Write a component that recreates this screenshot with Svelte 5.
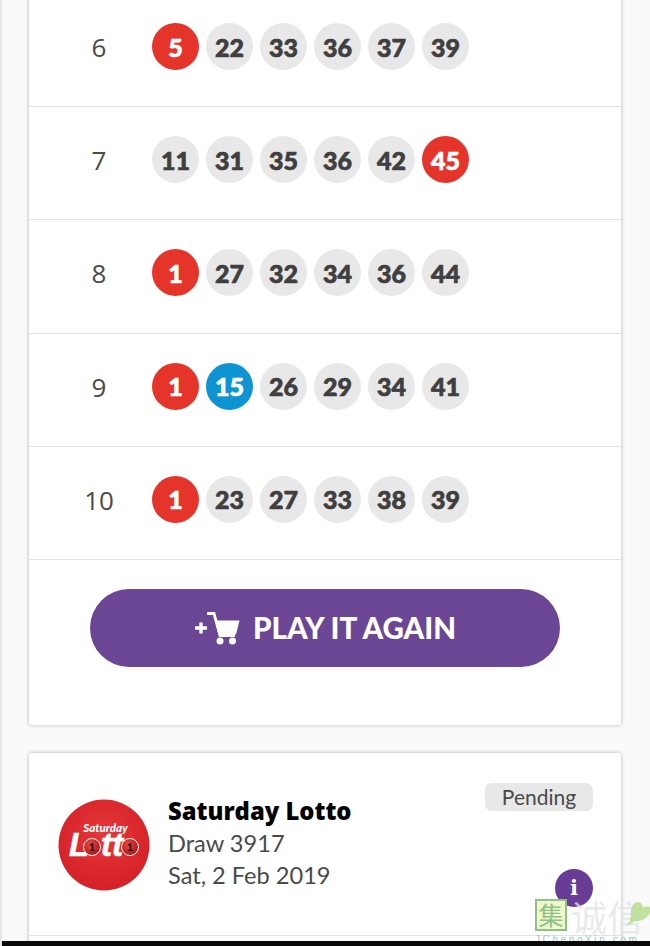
<script>
    const games = [
        { id: 6, balls: [[5, 'red'], [22], [33], [36], [37], [39]] },
        { id: 7, balls: [[11], [31], [35], [36], [42], [45, 'red']] },
        { id: 8, balls: [[1, 'red'], [27], [32], [34], [36], [44]] },
        { id: 9, balls: [[1, 'red'], [15, 'blue'], [26], [29], [34], [41]] },
        { id: 10, balls: [[1, 'red'], [23], [27], [33], [38], [39]] }
    ];
</script>

<div class="page">
    <div class="scroll">
        <section class="card results">
            {#each games as game}
                <div class="row">
                    <span class="num">{game.id}</span>
                    <div class="balls">
                        {#each game.balls as ball}
                            <span class="ball {ball[1] || ''}">{ball[0]}</span>
                        {/each}
                    </div>
                </div>
            {/each}
            <div class="action">
                <button type="button">
                    <svg class="cart" viewBox="0 0 46 34" width="46" height="34" aria-hidden="true">
                        <path d="M1 17h12M7 11.500v11" stroke="#fff" stroke-width="3.400" fill="none" />
                        <path d="M13 2.500h7l6 22h15" stroke="#fff" stroke-width="2.800" fill="none" />
                        <path d="M21 9.500h24.500l-3.500 14H24.500z" fill="#fff" />
                        <circle cx="26" cy="30" r="3.500" fill="#fff" />
                        <circle cx="38.500" cy="30" r="3.500" fill="#fff" />
                    </svg>
                    <span>PLAY IT AGAIN</span>
                </button>
            </div>
        </section>

        <section class="card draw">
            <div class="draw-body">
                <svg class="logo" viewBox="0 0 92 92" width="92" height="92" role="img" aria-label="Saturday Lotto">
                    <defs>
                        <radialGradient id="disc" cx="50%" cy="40%" r="60%">
                            <stop offset="0%" stop-color="#e5383a" />
                            <stop offset="100%" stop-color="#d42027" />
                        </radialGradient>
                        <radialGradient id="ball" cx="40%" cy="35%" r="65%">
                            <stop offset="0%" stop-color="#ee4a3e" />
                            <stop offset="100%" stop-color="#a5171a" />
                        </radialGradient>
                    </defs>
                    <circle cx="46" cy="46" r="45.500" fill="url(#disc)" />
                    <text x="47.500" y="33" class="logo-small">Saturday</text>
                    <text x="11" y="57" class="logo-big">L</text>
                    <text x="43" y="57" class="logo-big">tt</text>
                    <circle cx="34" cy="48" r="8.500" fill="url(#ball)" stroke="#fff" stroke-width="1" />
                    <text x="34" y="52" class="logo-one">1</text>
                    <circle cx="72" cy="48" r="8.500" fill="url(#ball)" stroke="#fff" stroke-width="1" />
                    <text x="72" y="52" class="logo-one">1</text>
                </svg>
                <div class="draw-text">
                    <h3>Saturday Lotto</h3>
                    <p>Draw 3917</p>
                    <p>Sat, 2 Feb 2019</p>
                </div>
                <span class="status">Pending</span>
                <span class="info">i</span>
            </div>
            <div class="draw-foot"></div>
        </section>
    </div>

    <!-- watermark over the corner of the screenshot -->
    <div class="watermark">
        <span class="wm-box">集</span>
        <span class="wm-text">诚信</span>
        <svg class="wm-leaf" viewBox="0 0 30 30" width="30" height="30" aria-hidden="true">
            <path d="M3 28C8 24 9 20 9 12c0-5 3-9 7-9 3 0 5 3 5 6 3-2 8-2 8 1 0 6-7 13-15 12-3 1-7 4-11 6z" fill="#b6dc8e" opacity="0.85" />
        </svg>
        <span class="wm-url">JChengXin.com</span>
    </div>
    <div class="bottom-bar"></div>
</div>

<style>
    :global(body) {
        margin: 0;
        background: #fafafa;
    }

    .page {
        position: relative;
        height: 946px;
        overflow: hidden;
        background: #fafafa;
        border-left: 2px solid #e6e6e6;
        box-sizing: border-box;
        font-family: "Lato", "Liberation Sans", sans-serif;
    }

    .scroll {
        margin-top: -6px;
        padding: 0 29px 0 27px;
        display: flex;
        flex-direction: column;
        gap: 28px;
    }

    .card {
        background: #fff;
        border-radius: 3px;
        box-shadow: 0 0 4px rgba(0, 0, 0, 0.28);
    }

    .row {
        display: flex;
        align-items: flex-start;
        height: 113.200px;
        padding-top: 29px;
        box-sizing: border-box;
        border-bottom: 1px solid #e3e3e3;
    }

    .num {
        width: 123px;
        padding-top: 8px;
        padding-left: 17px;
        box-sizing: border-box;
        text-align: center;
        font-family: "Open Sans", sans-serif;
        font-size: 26px;
        line-height: 32px;
        color: #4a4a4a;
    }

    .balls {
        display: flex;
        gap: 7px;
    }

    .ball {
        width: 47px;
        height: 47px;
        border-radius: 50%;
        display: flex;
        align-items: center;
        justify-content: center;
        background: #e8e8e8;
        color: #3f3f3f;
        font-family: "Lato", sans-serif;
        font-size: 25px;
        font-weight: 900;
        -webkit-text-stroke: 0.7px currentColor;
    }

    .ball.red {
        background: #e5352b;
        color: #fff;
    }

    .ball.blue {
        background: #0e94d3;
        color: #fff;
    }

    .action {
        padding: 29px 61px 58px;
    }

    button {
        width: 100%;
        height: 78px;
        border: none;
        border-radius: 39px;
        background: #6b4694;
        color: #fff;
        display: flex;
        align-items: center;
        justify-content: center;
        gap: 13px;
        font-family: inherit;
        font-size: 29.500px;
        font-weight: 900;
        padding: 0;
    }

    .draw {
        position: relative;
    }

    .draw-body {
        position: relative;
        display: flex;
        align-items: center;
        gap: 19px;
        height: 182px;
        padding: 2px 0 0 29px;
        box-sizing: border-box;
    }

    .logo {
        flex: none;
    }

    .logo-small {
        fill: #fff;
        font: italic 900 11.500px "Lato", sans-serif;
        text-anchor: middle;
    }

    .logo-big {
        fill: #fff;
        stroke: #fff;
        stroke-width: 0.6px;
        font: italic 700 33px "Liberation Sans", sans-serif;
    }

    .logo-one {
        fill: #2a1010;
        font: 900 11px "Lato", sans-serif;
        text-anchor: middle;
    }

    .draw-text {
        margin-top: -4px;
        margin-left: -1px;
    }

    h3 {
        margin: 0;
        font-family: "Open Sans", sans-serif;
        font-size: 23.800px;
        line-height: 32px;
        font-weight: 800;
        color: #000;
    }

    p {
        margin: 0;
        font-size: 23.600px;
        line-height: 32px;
        color: #4a4a4a;
    }

    .status {
        position: absolute;
        top: 30px;
        right: 28px;
        height: 28px;
        width: 108px;
        border-radius: 7px;
        background: #e8e8e8;
        color: #4a4a4a;
        font-size: 21px;
        line-height: 28px;
        text-align: center;
    }

    .info {
        position: absolute;
        top: 116px;
        right: 28px;
        width: 38px;
        height: 38px;
        border-radius: 50%;
        background: #693c96;
        color: #fff;
        text-align: center;
        font-family: "DejaVu Serif", serif;
        font-size: 21px;
        font-weight: 700;
        line-height: 38px;
    }

    .draw-foot {
        border-top: 1px solid #e3e3e3;
        height: 40px;
    }

    .watermark {
        position: absolute;
        left: 533px;
        top: 896px;
        width: 117px;
        height: 50px;
    }

    .wm-box {
        position: absolute;
        left: 0;
        top: 3px;
        width: 32px;
        height: 32px;
        box-sizing: border-box;
        border: 2px solid #8fc08a;
        background: #eef8c8;
        color: #8fc08a;
        font: 25px/27px "Noto Sans CJK SC", sans-serif;
        text-align: center;
    }

    .wm-text {
        position: absolute;
        left: 36px;
        top: -1px;
        color: rgba(222, 228, 228, 0.75);
        font: 36px/42px "Noto Sans CJK SC", sans-serif;
        white-space: nowrap;
    }

    .wm-leaf {
        position: absolute;
        left: 87px;
        top: 3px;
    }

    .wm-url {
        position: absolute;
        left: 0;
        top: 39px;
        color: #9cc8c4;
        font: 10px/10px "Liberation Sans", sans-serif;
        letter-spacing: 2.600px;
        white-space: nowrap;
    }

    .bottom-bar {
        position: absolute;
        left: -2px;
        right: 0;
        bottom: 0;
        height: 5px;
        background: #0a0a0a;
    }
</style>
